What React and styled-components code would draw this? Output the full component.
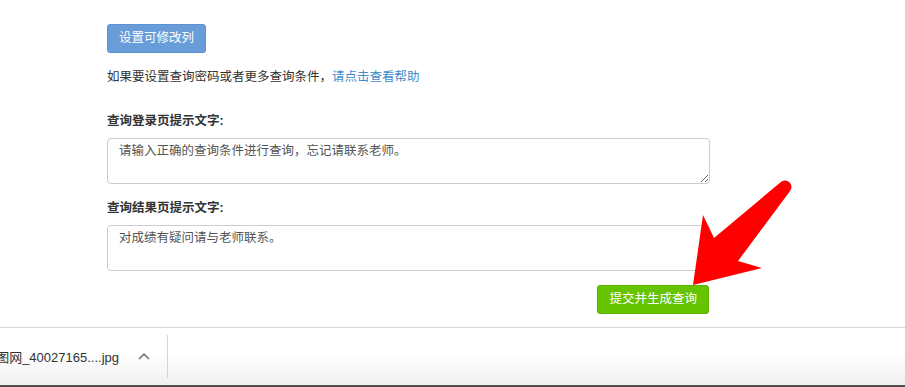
import React from "react";
import styled, { createGlobalStyle } from "styled-components";

const Global = createGlobalStyle`
  html, body { margin: 0; padding: 0; background: #fff; }
  body { font-family: "Helvetica Neue", "Liberation Sans", "Noto Sans CJK SC", sans-serif; }
  * { box-sizing: border-box; }
`;

const Screen = styled.div`
  position: relative;
  width: 905px;
  height: 387px;
  display: flex;
  flex-direction: column;
  overflow: hidden;
`;

const Main = styled.main`
  flex: 1;
  padding-left: 107px;
  padding-top: 24px;
`;

const Form = styled.div`
  width: 603px;
  display: flex;
  flex-direction: column;
  font-family: "Liberation Sans", "Noto Sans CJK SC", sans-serif;
  font-size: 12.5px;
  color: #333;
`;

const Button = styled.button`
  align-self: ${(p) => (p.$right ? "flex-end" : "flex-start")};
  height: 29px;
  margin-right: ${(p) => (p.$right ? "1px" : "0")};
  padding: 0 11px;
  border-radius: 3px;
  border: 1px solid ${(p) => p.$border};
  background: ${(p) => p.$bg};
  color: #fff;
  font-family: "Liberation Sans", "Noto Sans CJK SC", sans-serif;
  font-size: 12.5px;
  line-height: 1;
  cursor: pointer;
`;

const HelpLine = styled.p`
  margin: 14px 0 0;
  line-height: 20px;
`;

const Link = styled.a`
  color: #428bca;
  text-decoration: none;
`;

const Label = styled.label`
  font-weight: bold;
  line-height: 20px;
  margin-top: ${(p) => p.$top}px;
`;

const Area = styled.textarea`
  margin-top: 7px;
  width: 603px;
  height: 46px;
  padding: 3px 11px;
  border: 1px solid #ccc;
  border-radius: 4px;
  font-family: "Liberation Sans", "Noto Sans CJK SC", sans-serif;
  font-size: 12.5px;
  line-height: 18px;
  color: #555;
  resize: vertical;
  display: block;
`;

const SubmitRow = styled.div`
  display: flex;
  justify-content: flex-end;
  margin-top: 14px;
`;

const DownloadBar = styled.footer`
  height: 60px;
  margin-top: 1px;
  display: flex;
  align-items: center;
  border-top: 1px solid #d6d6d6;
  border-bottom: 2px solid #4d4d4d;
  background: linear-gradient(#ffffff 40%, #f0f0f0);
`;

const DownloadItem = styled.div`
  width: 167px;
  display: flex;
  justify-content: flex-end;
  align-items: center;
  gap: 18px;
  padding-right: 16px;
  overflow: hidden;
  white-space: nowrap;
`;

const FileName = styled.span`
  flex-shrink: 0;
  font-family: "Liberation Sans", "Noto Sans CJK SC", sans-serif;
  font-size: 13px;
  color: #333;
`;

const Chevron = styled.svg`
  flex-shrink: 0;
`;

const Separator = styled.div`
  width: 1px;
  height: 43px;
  background: #d4d4d4;
`;

const Arrow = styled.svg`
  position: absolute;
  left: 0;
  top: 0;
  pointer-events: none;
`;

export default function App() {
  return (
    <>
      <Global />
      <Screen>
        <Main>
          <Form>
            <Button $bg="#689dd9" $border="#5d91cf">设置可修改列</Button>
            <HelpLine>
              如果要设置查询密码或者更多查询条件，<Link href="#">请点击查看帮助</Link>
            </HelpLine>
            <Label $top={24}>查询登录页提示文字:</Label>
            <Area defaultValue="请输入正确的查询条件进行查询，忘记请联系老师。" />
            <Label $top={14}>查询结果页提示文字:</Label>
            <Area defaultValue="对成绩有疑问请与老师联系。" />
            <SubmitRow>
              <Button $right $bg="#66c300" $border="#5db000">提交并生成查询</Button>
            </SubmitRow>
          </Form>
        </Main>
        <DownloadBar>
          <DownloadItem>
            <FileName>图网_40027165....jpg</FileName>
            <Chevron width="14" height="9" viewBox="0 0 14 9">
              <path d="M2 7 L7 2.2 L12 7" fill="none" stroke="#777" strokeWidth="1.7" />
            </Chevron>
          </DownloadItem>
          <Separator />
        </DownloadBar>
        <Arrow width="905" height="387" viewBox="0 0 905 387">
          <path
            d="M693 285 L703 215 L714 238 L780.3 182.5 A6.5 6.5 0 0 1 789.7 191.5 L738 261 L762 268 Z"
            fill="#ff0000"
          />
        </Arrow>
      </Screen>
    </>
  );
}
